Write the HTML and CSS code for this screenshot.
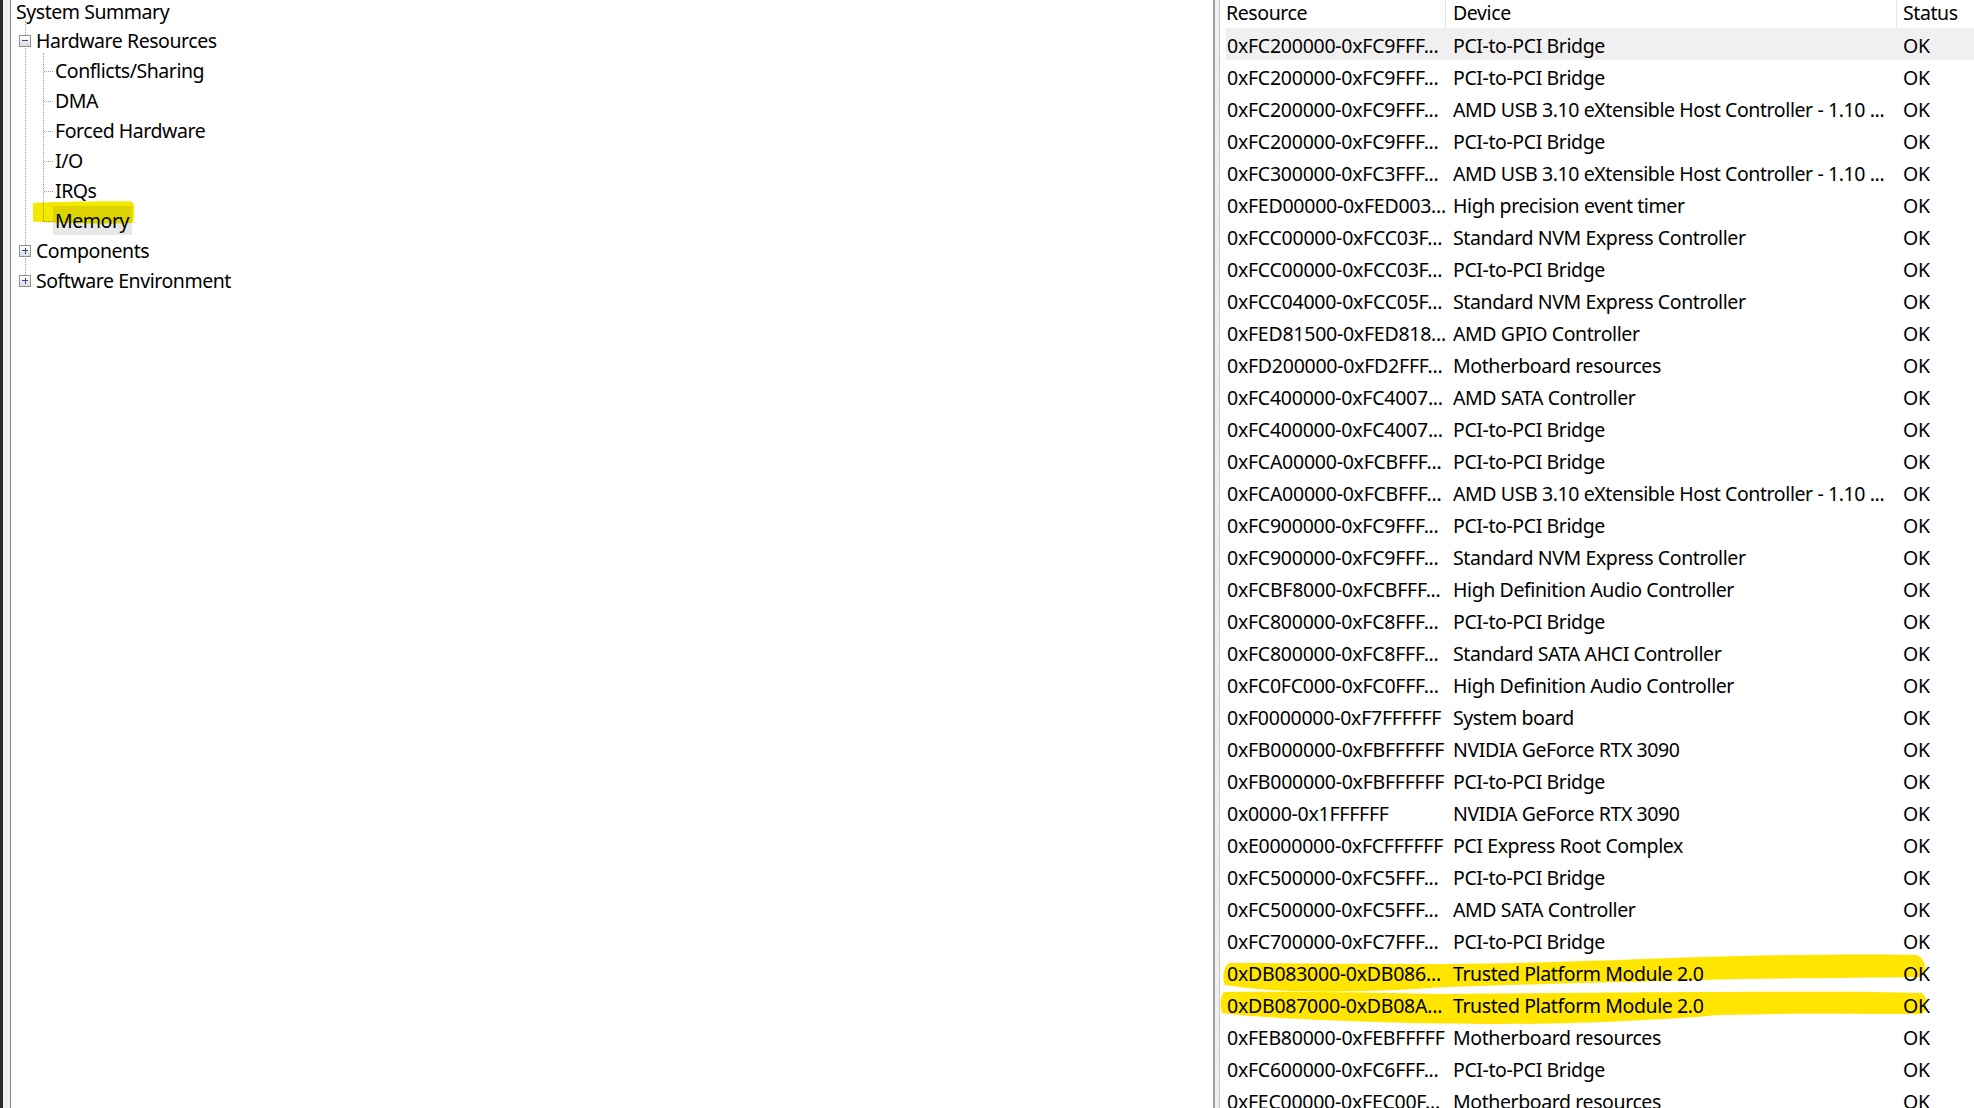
FILE: index.html
```html
<!DOCTYPE html>
<html lang="en">
<head>
<meta charset="utf-8">
<title>System Information</title>
<link rel="stylesheet" href="styles.css">
</head>
<body>
<div class="app">
  <div class="edge"></div>
  <div class="gutter"></div>
  <div class="tree-pane">
    <ul class="tree">
      <li class="node root"><span class="label">System Summary</span></li>
      <li class="group">
        <ul class="level1">
          <li class="node branch">
            <div class="row"><span class="exp minus"></span><span class="label">Hardware Resources</span></div>
            <ul class="children">
              <li class="leaf"><span class="label">Conflicts/Sharing</span></li>
              <li class="leaf"><span class="label">DMA</span></li>
              <li class="leaf"><span class="label">Forced Hardware</span></li>
              <li class="leaf"><span class="label">I/O</span></li>
              <li class="leaf"><span class="label">IRQs</span></li>
              <li class="leaf"><span class="label sel">Memory</span></li>
            </ul>
          </li>
          <li class="node branch">
            <div class="row"><span class="exp plus"></span><span class="label">Components</span></div>
          </li>
          <li class="node branch">
            <div class="row"><span class="exp plus"></span><span class="label">Software Environment</span></div>
          </li>
        </ul>
      </li>
    </ul>
  </div>
  <div class="splitter"></div>
  <div class="list-pane">
    <div class="list-head">
      <div class="hcell">Resource</div>
      <div class="hcell">Device</div>
      <div class="hcell last">Status</div>
    </div>
    <div class="list-body">
      <div class="lrow focus"><span class="c-res">0xFC200000-0xFC9FFF...</span><span class="c-dev">PCI-to-PCI Bridge</span><span class="c-st">OK</span></div>
      <div class="lrow"><span class="c-res">0xFC200000-0xFC9FFF...</span><span class="c-dev">PCI-to-PCI Bridge</span><span class="c-st">OK</span></div>
      <div class="lrow"><span class="c-res">0xFC200000-0xFC9FFF...</span><span class="c-dev">AMD USB 3.10 eXtensible Host Controller - 1.10 ...</span><span class="c-st">OK</span></div>
      <div class="lrow"><span class="c-res">0xFC200000-0xFC9FFF...</span><span class="c-dev">PCI-to-PCI Bridge</span><span class="c-st">OK</span></div>
      <div class="lrow"><span class="c-res">0xFC300000-0xFC3FFF...</span><span class="c-dev">AMD USB 3.10 eXtensible Host Controller - 1.10 ...</span><span class="c-st">OK</span></div>
      <div class="lrow"><span class="c-res">0xFED00000-0xFED003...</span><span class="c-dev">High precision event timer</span><span class="c-st">OK</span></div>
      <div class="lrow"><span class="c-res">0xFCC00000-0xFCC03F...</span><span class="c-dev">Standard NVM Express Controller</span><span class="c-st">OK</span></div>
      <div class="lrow"><span class="c-res">0xFCC00000-0xFCC03F...</span><span class="c-dev">PCI-to-PCI Bridge</span><span class="c-st">OK</span></div>
      <div class="lrow"><span class="c-res">0xFCC04000-0xFCC05F...</span><span class="c-dev">Standard NVM Express Controller</span><span class="c-st">OK</span></div>
      <div class="lrow"><span class="c-res">0xFED81500-0xFED818...</span><span class="c-dev">AMD GPIO Controller</span><span class="c-st">OK</span></div>
      <div class="lrow"><span class="c-res">0xFD200000-0xFD2FFF...</span><span class="c-dev">Motherboard resources</span><span class="c-st">OK</span></div>
      <div class="lrow"><span class="c-res">0xFC400000-0xFC4007...</span><span class="c-dev">AMD SATA Controller</span><span class="c-st">OK</span></div>
      <div class="lrow"><span class="c-res">0xFC400000-0xFC4007...</span><span class="c-dev">PCI-to-PCI Bridge</span><span class="c-st">OK</span></div>
      <div class="lrow"><span class="c-res">0xFCA00000-0xFCBFFF...</span><span class="c-dev">PCI-to-PCI Bridge</span><span class="c-st">OK</span></div>
      <div class="lrow"><span class="c-res">0xFCA00000-0xFCBFFF...</span><span class="c-dev">AMD USB 3.10 eXtensible Host Controller - 1.10 ...</span><span class="c-st">OK</span></div>
      <div class="lrow"><span class="c-res">0xFC900000-0xFC9FFF...</span><span class="c-dev">PCI-to-PCI Bridge</span><span class="c-st">OK</span></div>
      <div class="lrow"><span class="c-res">0xFC900000-0xFC9FFF...</span><span class="c-dev">Standard NVM Express Controller</span><span class="c-st">OK</span></div>
      <div class="lrow"><span class="c-res">0xFCBF8000-0xFCBFFF...</span><span class="c-dev">High Definition Audio Controller</span><span class="c-st">OK</span></div>
      <div class="lrow"><span class="c-res">0xFC800000-0xFC8FFF...</span><span class="c-dev">PCI-to-PCI Bridge</span><span class="c-st">OK</span></div>
      <div class="lrow"><span class="c-res">0xFC800000-0xFC8FFF...</span><span class="c-dev">Standard SATA AHCI Controller</span><span class="c-st">OK</span></div>
      <div class="lrow"><span class="c-res">0xFC0FC000-0xFC0FFF...</span><span class="c-dev">High Definition Audio Controller</span><span class="c-st">OK</span></div>
      <div class="lrow"><span class="c-res">0xF0000000-0xF7FFFFFF</span><span class="c-dev">System board</span><span class="c-st">OK</span></div>
      <div class="lrow"><span class="c-res">0xFB000000-0xFBFFFFFF</span><span class="c-dev">NVIDIA GeForce RTX 3090</span><span class="c-st">OK</span></div>
      <div class="lrow"><span class="c-res">0xFB000000-0xFBFFFFFF</span><span class="c-dev">PCI-to-PCI Bridge</span><span class="c-st">OK</span></div>
      <div class="lrow"><span class="c-res">0x0000-0x1FFFFFF</span><span class="c-dev">NVIDIA GeForce RTX 3090</span><span class="c-st">OK</span></div>
      <div class="lrow"><span class="c-res">0xE0000000-0xFCFFFFFF</span><span class="c-dev">PCI Express Root Complex</span><span class="c-st">OK</span></div>
      <div class="lrow"><span class="c-res">0xFC500000-0xFC5FFF...</span><span class="c-dev">PCI-to-PCI Bridge</span><span class="c-st">OK</span></div>
      <div class="lrow"><span class="c-res">0xFC500000-0xFC5FFF...</span><span class="c-dev">AMD SATA Controller</span><span class="c-st">OK</span></div>
      <div class="lrow"><span class="c-res">0xFC700000-0xFC7FFF...</span><span class="c-dev">PCI-to-PCI Bridge</span><span class="c-st">OK</span></div>
      <div class="lrow"><span class="c-res">0xDB083000-0xDB086...</span><span class="c-dev">Trusted Platform Module 2.0</span><span class="c-st">OK</span></div>
      <div class="lrow"><span class="c-res">0xDB087000-0xDB08A...</span><span class="c-dev">Trusted Platform Module 2.0</span><span class="c-st">OK</span></div>
      <div class="lrow"><span class="c-res">0xFEB80000-0xFEBFFFFF</span><span class="c-dev">Motherboard resources</span><span class="c-st">OK</span></div>
      <div class="lrow"><span class="c-res">0xFC600000-0xFC6FFF...</span><span class="c-dev">PCI-to-PCI Bridge</span><span class="c-st">OK</span></div>
      <div class="lrow"><span class="c-res">0xFEC00000-0xFEC00F...</span><span class="c-dev">Motherboard resources</span><span class="c-st">OK</span></div>
    </div>
  </div>
</div>
<svg class="marks" viewBox="0 0 1974 1108" width="1974" height="1108" aria-hidden="true">
  <path fill="#f2e800" d="M33 203 C 60 202, 100 201, 131 201.5 C 135 203, 135 211, 133 223 C 110 224, 80 223.5, 55 222.5 L 33 221.5 Z"/>
  <path fill="#ffe500" d="M1229 963 C 1280 963, 1380 964, 1448 964 C 1540 963, 1620 960, 1700 957 C 1780 955, 1850 954, 1916 955 C 1926 958, 1928 972, 1920 977 C 1860 978, 1780 978, 1700 980 C 1620 982, 1540 984, 1448 987 C 1400 990, 1340 993, 1290 991 C 1260 990, 1240 987, 1225 985 C 1222 978, 1223 968, 1229 963 Z"/>
  <path fill="#ffe500" d="M1224 992 C 1300 991, 1380 993, 1448 994 C 1560 993, 1650 992, 1720 992 C 1800 992, 1860 991, 1922 993 C 1928 998, 1928 1009, 1922 1014 C 1860 1014, 1800 1013, 1720 1015 C 1660 1020, 1580 1024, 1500 1024 C 1420 1024, 1340 1021, 1280 1018 C 1250 1016, 1235 1015, 1222 1013 C 1220 1005, 1220 996, 1224 992 Z"/>
</svg>
</body>
</html>
```

FILE: styles.css
```css
html, body {
  margin: 0;
  padding: 0;
  height: 100%;
  overflow: hidden;
  background: #ffffff;
}

body {
  font-family: "Noto Sans", "Open Sans", sans-serif;
  font-size: 19.5px;
  color: #000000;
}

.app {
  display: flex;
  height: 1108px;
  width: 1974px;
}

.edge {
  width: 3px;
  background: #2a2a2a;
  flex: none;
}

.gutter {
  width: 7px;
  background: #f0f0f0;
  border-right: 1px solid #828790;
  flex: none;
}

/* ---------- tree ---------- */
.tree-pane {
  width: 1202px;
  flex: none;
  background: #ffffff;
  border-right: 2px solid #a0a0a0;
  overflow: hidden;
}

.tree, .tree ul {
  list-style: none;
  margin: 0;
  padding: 0;
}

.tree {
  margin-top: -3px;
  position: relative;
}

.tree li {
  position: relative;
}

.label {
  display: inline-block;
  line-height: 30px;
  height: 30px;
  white-space: nowrap;
  letter-spacing: -0.45px;
}

.root {
  height: 29px;
  padding-left: 5px;
}

.level1 {
  position: relative;
}

.level1::before {
  content: "";
  position: absolute;
  left: 14px;
  top: -5px;
  height: 254px;
  border-left: 1px dotted #a0a0a0;
}

.row {
  display: flex;
  align-items: center;
  height: 30px;
  padding-left: 8px;
  position: relative;
}

.exp {
  width: 12px;
  height: 12px;
  box-sizing: border-box;
  border: 1px solid #919191;
  background: linear-gradient(#ffffff, #dcdcdc);
  margin-right: 5px;
  position: relative;
  flex: none;
  z-index: 1;
}

.exp::before {
  content: "";
  position: absolute;
  left: 2px;
  top: 4px;
  width: 6px;
  height: 1px;
  background: #2b4a8f;
}

.plus::after {
  content: "";
  position: absolute;
  left: 4.5px;
  top: 1.5px;
  width: 1px;
  height: 6px;
  background: #2b4a8f;
}

.children {
  position: relative;
}

.children::before {
  content: "";
  position: absolute;
  left: 32px;
  top: -3px;
  height: 168px;
  border-left: 1px dotted #a0a0a0;
}

.leaf {
  height: 30px;
  padding-left: 44px;
}

.leaf::before {
  content: "";
  position: absolute;
  left: 33px;
  top: 15px;
  width: 9px;
  border-top: 1px dotted #a0a0a0;
}

.label.sel {
  background: #e8e8e8;
  margin-left: -2px;
  padding: 0 3px 0 2px;
  height: 29px;
}

/* ---------- splitter ---------- */
.splitter {
  width: 4px;
  flex: none;
  background: #f0f0f0;
}

/* ---------- list ---------- */
.list-pane {
  flex: 1;
  border-left: 1px solid #c3c3c3;
  background: #ffffff;
  overflow: hidden;
}

.list-head {
  display: grid;
  grid-template-columns: 226px 451px 1fr;
  height: 28px;
  line-height: 26px;
}

.hcell {
  padding-left: 6px;
  border-right: 1px solid #e5e5e5;
  white-space: nowrap;
  letter-spacing: -0.4px;
}

.hcell:nth-child(2) {
  padding-left: 7px;
}

.hcell.last {
  border-right: none;
}

.lrow {
  display: grid;
  grid-template-columns: 220px 451px 1fr;
  margin-left: 6px;
  height: 32px;
  box-sizing: border-box;
  padding-top: 3px;
  line-height: 29px;
  white-space: nowrap;
}

.lrow.focus {
  background: #f0f0f0;
}

.c-res {
  padding-left: 1px;
  letter-spacing: -0.25px;
  overflow: visible;
}

.c-dev {
  padding-left: 7px;
  letter-spacing: -0.4px;
  overflow: hidden;
}

.c-st {
  padding-left: 6px;
  letter-spacing: -0.3px;
}

/* ---------- marker overlay ---------- */
.marks {
  position: fixed;
  left: 0;
  top: 0;
  pointer-events: none;
  mix-blend-mode: multiply;
}
```
